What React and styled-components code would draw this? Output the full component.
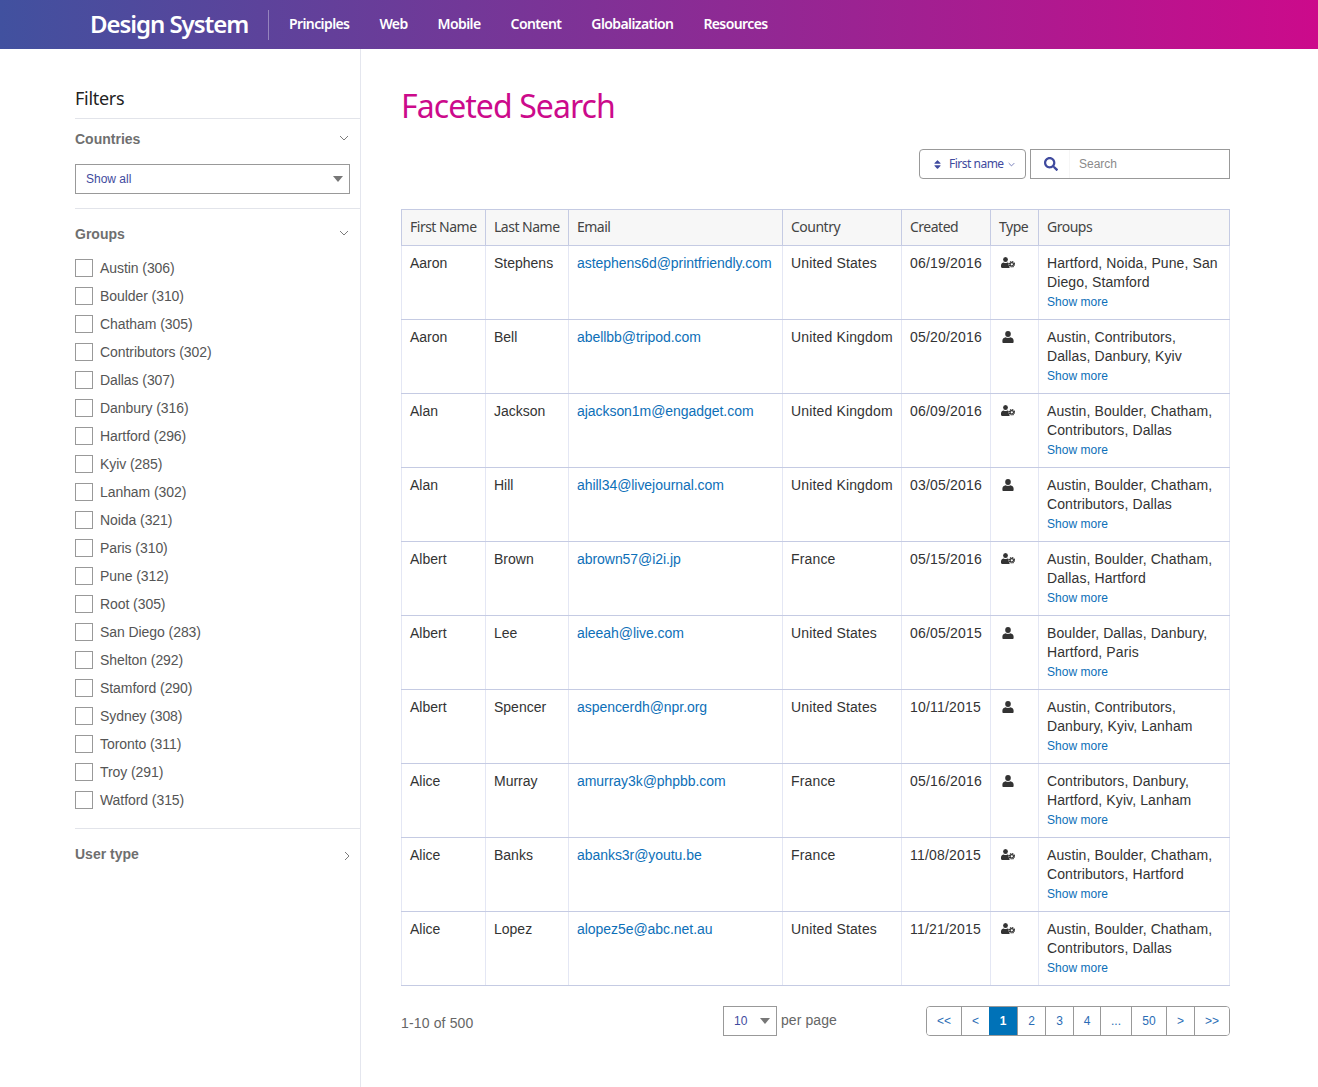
import React from "react";
import styled, { createGlobalStyle } from "styled-components";
import { FaSort, FaSearch } from "react-icons/fa";

const Global = createGlobalStyle`
  html, body { margin: 0; padding: 0; background: #fff; }
  body { font-family: "Liberation Sans", Arial, sans-serif; color: #333; }
  * { box-sizing: border-box; }
`;

const HEAD = `"Noto Sans", "Open Sans", sans-serif`;
const BODY = `"Liberation Sans", Arial, sans-serif`;

const Page = styled.div`
  width: 1318px;
  height: 1087px;
  overflow: hidden;
  display: flex;
  flex-direction: column;
`;
const Header = styled.header`
  height: 49px;
  flex: none;
  display: flex;
  align-items: center;
  padding-left: 90px;
  background: linear-gradient(90deg, #41519f 0%, #cc0a8b 100%);
`;
const Brand = styled.div`
  font: 600 24px/28px ${HEAD};
  letter-spacing: -1.05px;
  color: #fff;
  width: 179px;
  height: 30px;
  border-right: 1px solid rgba(255, 255, 255, 0.35);
  white-space: nowrap;
`;
const Nav = styled.nav`
  display: flex;
  padding-left: 20px;
  padding-bottom: 2px;
  gap: 30px;
`;
const NavItem = styled.a`
  font: 600 14px/20px ${HEAD};
  letter-spacing: -0.6px;
  color: #fff;
`;
const Body = styled.div`
  flex: 1;
  display: flex;
`;
const Sidebar = styled.aside`
  width: 361px;
  flex: none;
  padding: 37px 0 0 75px;
  border-right: 1px solid #e4e6ee;
`;
const FiltersTitle = styled.h2`
  margin: 0;
  height: 32px;
  font: 400 18px/24px ${HEAD};
  letter-spacing: -0.3px;
  color: #222;
  border-bottom: 1px solid #e2e4ea;
  box-sizing: content-box;
`;
const Section = styled.section`
  padding-right: 10px;
  border-bottom: ${(p) => (p.$last ? "none" : "1px solid #e2e4ea")};
  height: ${(p) => p.$h}px;
`;
const SectionHead = styled.div`
  display: flex;
  justify-content: space-between;
  align-items: center;
  height: ${(p) => p.$h}px;
  margin-bottom: ${(p) => p.$gap || 0}px;
  font: 700 14px/20px ${BODY};
  color: #6f6f6f;
`;
const Chevron = styled.svg`
  width: 10px;
  height: 6px;
  fill: none;
  stroke: #7c7c7c;
  stroke-width: 1;
  margin: -2px 1px 0 0;
`;
const SmallChevron = styled.svg`
  width: 7px;
  height: 5px;
  fill: none;
  stroke: #3f4a9e;
  stroke-width: 1;
`;
const ChevronRight = styled.svg`
  width: 6px;
  height: 10px;
  fill: none;
  stroke: #7c7c7c;
  stroke-width: 1;
  margin: 4px 0 0 0;
`;
const SelectBox = styled.div`
  height: 30px;
  width: ${(p) => p.$w || "100%"};
  flex: none;
  border: 1px solid #999;
  background: #fff;
  display: flex;
  align-items: center;
  justify-content: space-between;
  font: 12px/16px ${BODY};
  color: #3f4a9e;
  padding: 0 6px 0 10px;
`;
const Caret = styled.span`
  width: 0;
  height: 0;
  border-left: 5.5px solid transparent;
  border-right: 5.5px solid transparent;
  border-top: 6px solid #777;
`;
const CheckList = styled.ul`
  list-style: none;
  margin: 0;
  padding: 0;
  display: flex;
  flex-direction: column;
  gap: 10px;
`;
const CheckItem = styled.li`
  display: flex;
  align-items: center;
  height: 18px;
  gap: 7px;
  font: 14px/18px ${BODY};
  letter-spacing: -0.07px;
  color: #555;
`;
const Box = styled.span`
  width: 18px;
  height: 18px;
  border: 1px solid #999;
  background: #fff;
  flex: none;
`;
const Main = styled.main`
  flex: 1;
  padding: 0 0 0 40px;
  min-width: 0;
`;
const Title = styled.h1`
  margin: 35px 0 0;
  height: 44px;
  font: 400 32px/44px ${HEAD};
  letter-spacing: -0.93px;
  color: #cc0a8b;
`;
const Toolbar = styled.div`
  margin-top: 21px;
  width: 829px;
  height: 30px;
  display: flex;
  justify-content: flex-end;
  gap: 4px;
`;
const SortButton = styled.button`
  width: 107px;
  height: 30px;
  padding: 0 0 0 12px;
  border: 1px solid #999;
  border-radius: 4px;
  background: #fff;
  display: flex;
  align-items: center;
  font: 12px/16px ${HEAD};
  letter-spacing: -0.5px;
  color: #3f4a9e;
`;
const SortLabel = styled.span`
  margin: 0 4px 0 6px;
`;
const SearchBox = styled.div`
  width: 200px;
  height: 30px;
  border: 1px solid #999;
  display: flex;
  align-items: center;
  padding-left: 13px;
  color: #3f4a9e;
`;
const SearchText = styled.span`
  margin-left: 11px;
  padding-left: 9px;
  height: 100%;
  flex: 1;
  display: flex;
  align-items: center;
  border-left: 1px solid #f6f6f6;
  font: 12px/16px ${BODY};
  color: #8a8a8a;
`;
const Table = styled.table`
  margin-top: 30px;
  width: 828px;
  table-layout: fixed;
  border-collapse: collapse;
  border: 1px solid #c5cbe3;
  font: 14px/19px ${BODY};
  color: #333;
`;
const Th = styled.th`
  height: 36px;
  padding: 0 8px 2px;
  text-align: left;
  font: 400 14px/19px ${HEAD};
  letter-spacing: -0.5px;
  color: #444;
  background: #f7f7f7;
  border: 1px solid #c5cbe3;
  white-space: nowrap;
`;
const Tr = styled.tr`
  height: 74px;
`;
const Td = styled.td`
  padding: 8px 8px 0;
  vertical-align: top;
  letter-spacing: ${(p) => p.$ls || 0}px;
  border-top: 1px solid #c5cbe3;
  border-bottom: 1px solid #c5cbe3;
  border-left: 1px solid #e4e7f4;
  border-right: 1px solid #e4e7f4;
  white-space: ${(p) => (p.$wrap ? "normal" : "nowrap")};
`;
const Email = styled.a`
  color: #0d6fb8;
  letter-spacing: -0.05px;
`;
const IconCell = styled.span`
  display: block;
  padding: 3px 0 0 ${(p) => (p.$single ? 3 : 2)}px;
  line-height: 0;
`;
const TypeIcon = styled.svg`
  fill: #333;
`;
const ShowMore = styled.a`
  display: block;
  font-size: 12px;
  line-height: 19px;
  padding-top: 1px;
  letter-spacing: 0.03px;
  color: #0d6fb8;
`;
const Footer = styled.div`
  width: 829px;
  margin-top: 20px;
  display: flex;
  align-items: flex-start;
`;
const Range = styled.div`
  width: 322px;
  padding-top: 8px;
  font: 14px/19px ${BODY};
  letter-spacing: 0.15px;
  color: #666;
`;
const PerPage = styled.div`
  width: 203px;
  display: flex;
  align-items: center;
  gap: 4px;
  font: 14px/19px ${BODY};
  letter-spacing: 0.08px;
  color: #666;
`;
const PerPageLabel = styled.span`
  padding-bottom: 2px;
`;
const Pager = styled.div`
  display: flex;
  height: 30px;
  border: 1px solid #999;
  border-radius: 4px;
  overflow: hidden;
`;
const PageCell = styled.span`
  width: ${(p) => p.$w}px;
  height: 100%;
  display: flex;
  align-items: center;
  justify-content: center;
  font: 12px/16px ${BODY};
  color: ${(p) => (p.$active ? "#fff" : "#2a6cb5")};
  font-weight: ${(p) => (p.$active ? 700 : 400)};
  background: ${(p) => (p.$active ? "#0072b8" : "#fff")};
  border-left: ${(p) => (p.$first || p.$active ? "none" : "1px solid #999")};
`;

const groups = ["Austin (306)", "Boulder (310)", "Chatham (305)", "Contributors (302)", "Dallas (307)", "Danbury (316)", "Hartford (296)", "Kyiv (285)", "Lanham (302)", "Noida (321)", "Paris (310)", "Pune (312)", "Root (305)", "San Diego (283)", "Shelton (292)", "Stamford (290)", "Sydney (308)", "Toronto (311)", "Troy (291)", "Watford (315)"];

const cols = [84, 83, 214, 119, 89, 48, 191];
const heads = ["First Name", "Last Name", "Email", "Country", "Created", "Type", "Groups"];
const rows = [
  ["Aaron", "Stephens", "astephens6d@printfriendly.com", "United States", "06/19/2016", "a", "Hartford, Noida, Pune, San Diego, Stamford"],
  ["Aaron", "Bell", "abellbb@tripod.com", "United Kingdom", "05/20/2016", "u", "Austin, Contributors, Dallas, Danbury, Kyiv"],
  ["Alan", "Jackson", "ajackson1m@engadget.com", "United Kingdom", "06/09/2016", "a", "Austin, Boulder, Chatham, Contributors, Dallas"],
  ["Alan", "Hill", "ahill34@livejournal.com", "United Kingdom", "03/05/2016", "u", "Austin, Boulder, Chatham, Contributors, Dallas"],
  ["Albert", "Brown", "abrown57@i2i.jp", "France", "05/15/2016", "a", "Austin, Boulder, Chatham, Dallas, Hartford"],
  ["Albert", "Lee", "aleeah@live.com", "United States", "06/05/2015", "u", "Boulder, Dallas, Danbury, Hartford, Paris"],
  ["Albert", "Spencer", "aspencerdh@npr.org", "United States", "10/11/2015", "u", "Austin, Contributors, Danbury, Kyiv, Lanham"],
  ["Alice", "Murray", "amurray3k@phpbb.com", "France", "05/16/2016", "u", "Contributors, Danbury, Hartford, Kyiv, Lanham"],
  ["Alice", "Banks", "abanks3r@youtu.be", "France", "11/08/2015", "a", "Austin, Boulder, Chatham, Contributors, Hartford"],
  ["Alice", "Lopez", "alopez5e@abc.net.au", "United States", "11/21/2015", "a", "Austin, Boulder, Chatham, Contributors, Dallas"],
];
const pages = [["<<", 34], ["<", 28], ["1", 28, true], ["2", 28], ["3", 28], ["4", 27], ["...", 31], ["50", 35], [">", 28], [">>", 35]];

const Down = () => (
  <Chevron viewBox="0 0 10 6"><path d="M1 1l4 4 4-4" /></Chevron>
);

const UserIcon = () => (
  <TypeIcon width="12" height="12" viewBox="0 0 12 12">
    <ellipse cx="6" cy="3" rx="2.8" ry="3" />
    <path d="M.4 11V9.6C.4 7.6 2 6.8 3.6 6.3c.9.8 3.9.8 4.8 0 1.6.5 3.2 1.3 3.2 3.3V11c0 .6-.5 1-1.2 1H1.600C.9 12 .4 11.600.4 11z" />
  </TypeIcon>
);

const CogIcon = () => (
  <TypeIcon width="14" height="11" viewBox="0 0 14 11">
    <ellipse cx="4.500" cy="2.500" rx="2.400" ry="2.500" />
    <path d="M0 9.800V8.200C0 6.400 1.400 5.800 2.800 5.400c.9.7 2.500.7 3.400 0 1.400.4 2.800 1 2.800 2.800v1.600c0 .7-.5 1.200-1.200 1.200H1.200C.5 11 0 10.500 0 9.800z" />
    <circle cx="10.800" cy="7.300" r="3.200" fill="#fff" />
    <circle cx="10.800" cy="7.300" r="2.600" fill="none" stroke="#333" strokeWidth="1.300" strokeDasharray="1.300 .74" />
    <circle cx="10.800" cy="7.300" r="1.700" fill="none" stroke="#333" strokeWidth="1.100" />
  </TypeIcon>
);

export default function App() {
  return (
    <Page>
      <Global />
      <Header>
        <Brand>Design System</Brand>
        <Nav>
          {["Principles", "Web", "Mobile", "Content", "Globalization", "Resources"].map((n) => (
            <NavItem key={n}>{n}</NavItem>
          ))}
        </Nav>
      </Header>
      <Body>
        <Sidebar>
          <FiltersTitle>Filters</FiltersTitle>
          <Section $h={90}>
            <SectionHead $h={40} $gap={5}>Countries<Down /></SectionHead>
            <SelectBox $w="275px">Show all<Caret /></SelectBox>
          </Section>
          <Section $h={620}>
            <SectionHead $h={50}>Groups<Down /></SectionHead>
            <CheckList>
              {groups.map((g) => (
                <CheckItem key={g}><Box />{g}</CheckItem>
              ))}
            </CheckList>
          </Section>
          <Section $last>
            <SectionHead $h={50}>
              User type
              <ChevronRight viewBox="0 0 6 10"><path d="M1 1l4 4-4 4" /></ChevronRight>
            </SectionHead>
          </Section>
        </Sidebar>
        <Main>
          <Title>Faceted Search</Title>
          <Toolbar>
            <SortButton>
              <FaSort size={11} />
              <SortLabel>First name</SortLabel>
              <SmallChevron viewBox="0 0 10 6"><path d="M1 1l4 4 4-4" /></SmallChevron>
            </SortButton>
            <SearchBox><FaSearch size={14} /><SearchText>Search</SearchText></SearchBox>
          </Toolbar>
          <Table>
            <colgroup>{cols.map((w, i) => <col key={i} style={{ width: w }} />)}</colgroup>
            <thead><tr>{heads.map((h) => <Th key={h}>{h}</Th>)}</tr></thead>
            <tbody>
              {rows.map((r) => (
                <Tr key={r[2]}>
                  <Td>{r[0]}</Td>
                  <Td>{r[1]}</Td>
                  <Td><Email>{r[2]}</Email></Td>
                  <Td $ls={0.15}>{r[3]}</Td>
                  <Td $ls={0.2}>{r[4]}</Td>
                  <Td><IconCell $single={r[5] === "u"}>{r[5] === "u" ? <UserIcon /> : <CogIcon />}</IconCell></Td>
                  <Td $wrap $ls={0.1}>{r[6]}<ShowMore>Show more</ShowMore></Td>
                </Tr>
              ))}
            </tbody>
          </Table>
          <Footer>
            <Range>1-10 of 500</Range>
            <PerPage>
              <SelectBox $w="54px">10<Caret /></SelectBox>
              <PerPageLabel>per page</PerPageLabel>
            </PerPage>
            <Pager>
              {pages.map(([t, w, a], i) => (
                <PageCell key={i} $w={w} $active={a} $first={i === 0}>{t}</PageCell>
              ))}
            </Pager>
          </Footer>
        </Main>
      </Body>
    </Page>
  );
}
